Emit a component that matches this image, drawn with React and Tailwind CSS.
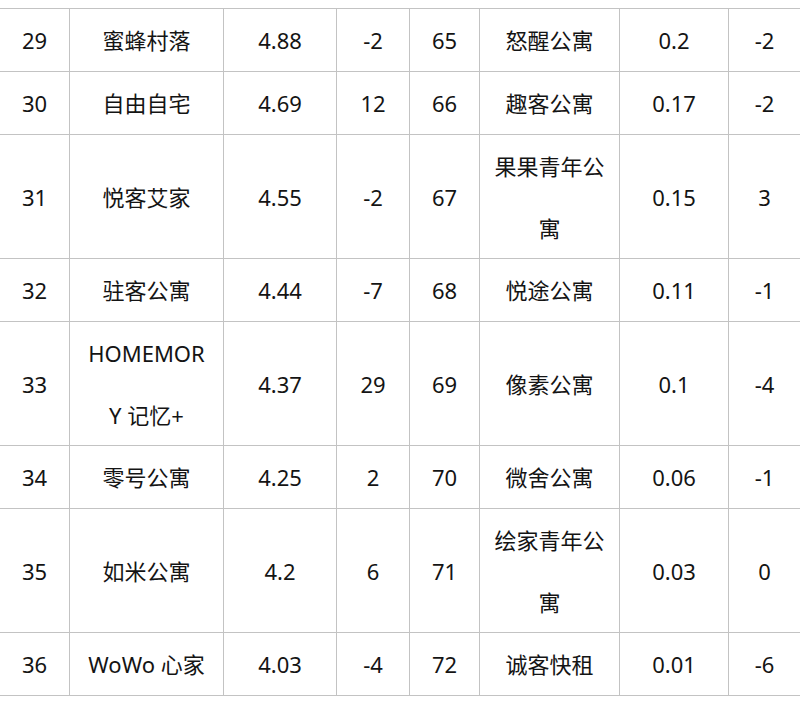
import React from "react";

const rows = [
  { h: "h-[63px]", left: ["29", ["蜜蜂村落"], "4.88", "-2"], right: ["65", ["怒醒公寓"], "0.2", "-2"] },
  { h: "h-[63px]", left: ["30", ["自由自宅"], "4.69", "12"], right: ["66", ["趣客公寓"], "0.17", "-2"] },
  { h: "h-[124px]", left: ["31", ["悦客艾家"], "4.55", "-2"], right: ["67", ["果果青年公", "寓"], "0.15", "3"] },
  { h: "h-[63px]", left: ["32", ["驻客公寓"], "4.44", "-7"], right: ["68", ["悦途公寓"], "0.11", "-1"] },
  { h: "h-[124px]", left: ["33", ["HOMEMOR", "Y 记忆+"], "4.37", "29"], right: ["69", ["像素公寓"], "0.1", "-4"] },
  { h: "h-[63px]", left: ["34", ["零号公寓"], "4.25", "2"], right: ["70", ["微舍公寓"], "0.06", "-1"] },
  { h: "h-[124px]", left: ["35", ["如米公寓"], "4.2", "6"], right: ["71", ["绘家青年公", "寓"], "0.03", "0"] },
  { h: "h-[63px]", left: ["36", ["WoWo 心家"], "4.03", "-4"], right: ["72", ["诚客快租"], "0.01", "-6"] },
];

const widths = ["w-[70px]", "w-[154px]", "w-[113px]", "w-[73px]", "w-[70px]", "w-[140px]", "w-[109px]", "w-[71px]"];

const Cell = ({ value, width, last }) => (
  <div
    className={`${width} shrink-0 flex flex-col items-center justify-center border-b border-[#c3c3c3] ${
      last ? "" : "border-r"
    }`}
  >
    {Array.isArray(value) ? (
      value.map((line, i) => (
        <span key={i} className="leading-[62px] whitespace-nowrap">
          {line}
        </span>
      ))
    ) : (
      <span className="leading-[62px]">{value}</span>
    )}
  </div>
);

const App = () => {
  return (
    <div
      className="w-[800px] h-[702px] bg-white pt-[8px] text-[22px] text-[#141414]"
      style={{ fontFamily: '"Noto Sans", "Noto Sans CJK SC", sans-serif' }}
    >
      <div className="border-t border-[#c3c3c3]">
        {rows.map((row, r) => {
          const cells = [...row.left, ...row.right];
          return (
            <div key={r} className={`flex ${row.h}`}>
              {cells.map((c, i) => (
                <Cell key={i} value={c} width={widths[i]} last={i === 7} />
              ))}
            </div>
          );
        })}
      </div>
    </div>
  );
};

export default App;
